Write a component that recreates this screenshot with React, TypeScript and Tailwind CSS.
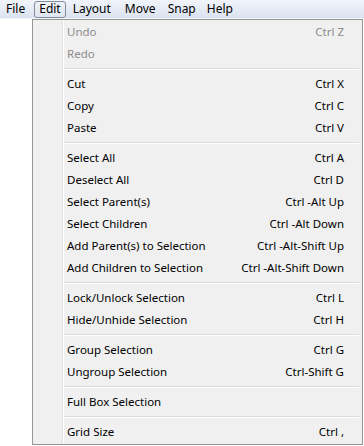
type Item = { label: string; shortcut?: string; disabled?: boolean } | 'sep';

const items: Item[] = [
  { label: 'Undo', shortcut: 'Ctrl Z', disabled: true },
  { label: 'Redo', disabled: true },
  'sep',
  { label: 'Cut', shortcut: 'Ctrl X' },
  { label: 'Copy', shortcut: 'Ctrl C' },
  { label: 'Paste', shortcut: 'Ctrl V' },
  'sep',
  { label: 'Select All', shortcut: 'Ctrl A' },
  { label: 'Deselect All', shortcut: 'Ctrl D' },
  { label: 'Select Parent(s)', shortcut: 'Ctrl -Alt Up' },
  { label: 'Select Children', shortcut: 'Ctrl -Alt Down' },
  { label: 'Add Parent(s) to Selection', shortcut: 'Ctrl -Alt-Shift Up' },
  { label: 'Add Children to Selection', shortcut: 'Ctrl -Alt-Shift Down' },
  'sep',
  { label: 'Lock/Unlock Selection', shortcut: 'Ctrl L' },
  { label: 'Hide/Unhide Selection', shortcut: 'Ctrl H' },
  'sep',
  { label: 'Group Selection', shortcut: 'Ctrl G' },
  { label: 'Ungroup Selection', shortcut: 'Ctrl-Shift G' },
  'sep',
  { label: 'Full Box Selection' },
  'sep',
  { label: 'Grid Size', shortcut: 'Ctrl ,' },
];

export default function App() {
  return (
    <div className="w-[364px] h-[446px] bg-white overflow-hidden text-[11.5px] text-black" style={{ fontFamily: '"Noto Sans", "Liberation Sans", sans-serif' }}>
      {/* menu bar */}
      <div className="h-[19px] flex items-center bg-gradient-to-b from-[#f1f4fa] to-[#dbe3f1] border-b border-[#f3f5fa] text-[12px]">
        <span className="ml-[6px] leading-[16px]">File</span>
        <span className="ml-[9px] h-[17px] px-[4px] flex items-center border border-[#838c99] rounded-[3px] bg-gradient-to-b from-[#eef1f7] to-[#dfe5f0] leading-[16px]">Edit</span>
        <span className="ml-[7px] leading-[16px]">Layout</span>
        <span className="ml-[14px] leading-[16px]">Move</span>
        <span className="ml-[12px] leading-[16px]">Snap</span>
        <span className="ml-[11px] leading-[16px]">Help</span>
      </div>

      {/* dropdown */}
      <div className="ml-[32px] w-[331px] border border-[#979797] bg-[#f0f0f0] pt-[1px] pb-[1px] relative">
        <div className="absolute left-[29px] top-0 bottom-0 w-[2px] border-l border-[#e2e3e3] bg-white" />
        {items.map((it, i) =>
          it === 'sep' ? (
            <div key={i} className="h-[8px] flex items-center pl-[31px] pr-[3px] relative">
              <div className="w-full h-[2px] border-t border-[#dadada] bg-white" />
            </div>
          ) : (
            <div key={i} className={`h-[22px] flex items-center justify-between pl-[34px] pr-[18px] relative ${it.disabled ? 'text-[#8d8d8d]' : ''}`}>
              <span>{it.label}</span>
              {it.shortcut && <span>{it.shortcut}</span>}
            </div>
          )
        )}
      </div>
    </div>
  );
}
